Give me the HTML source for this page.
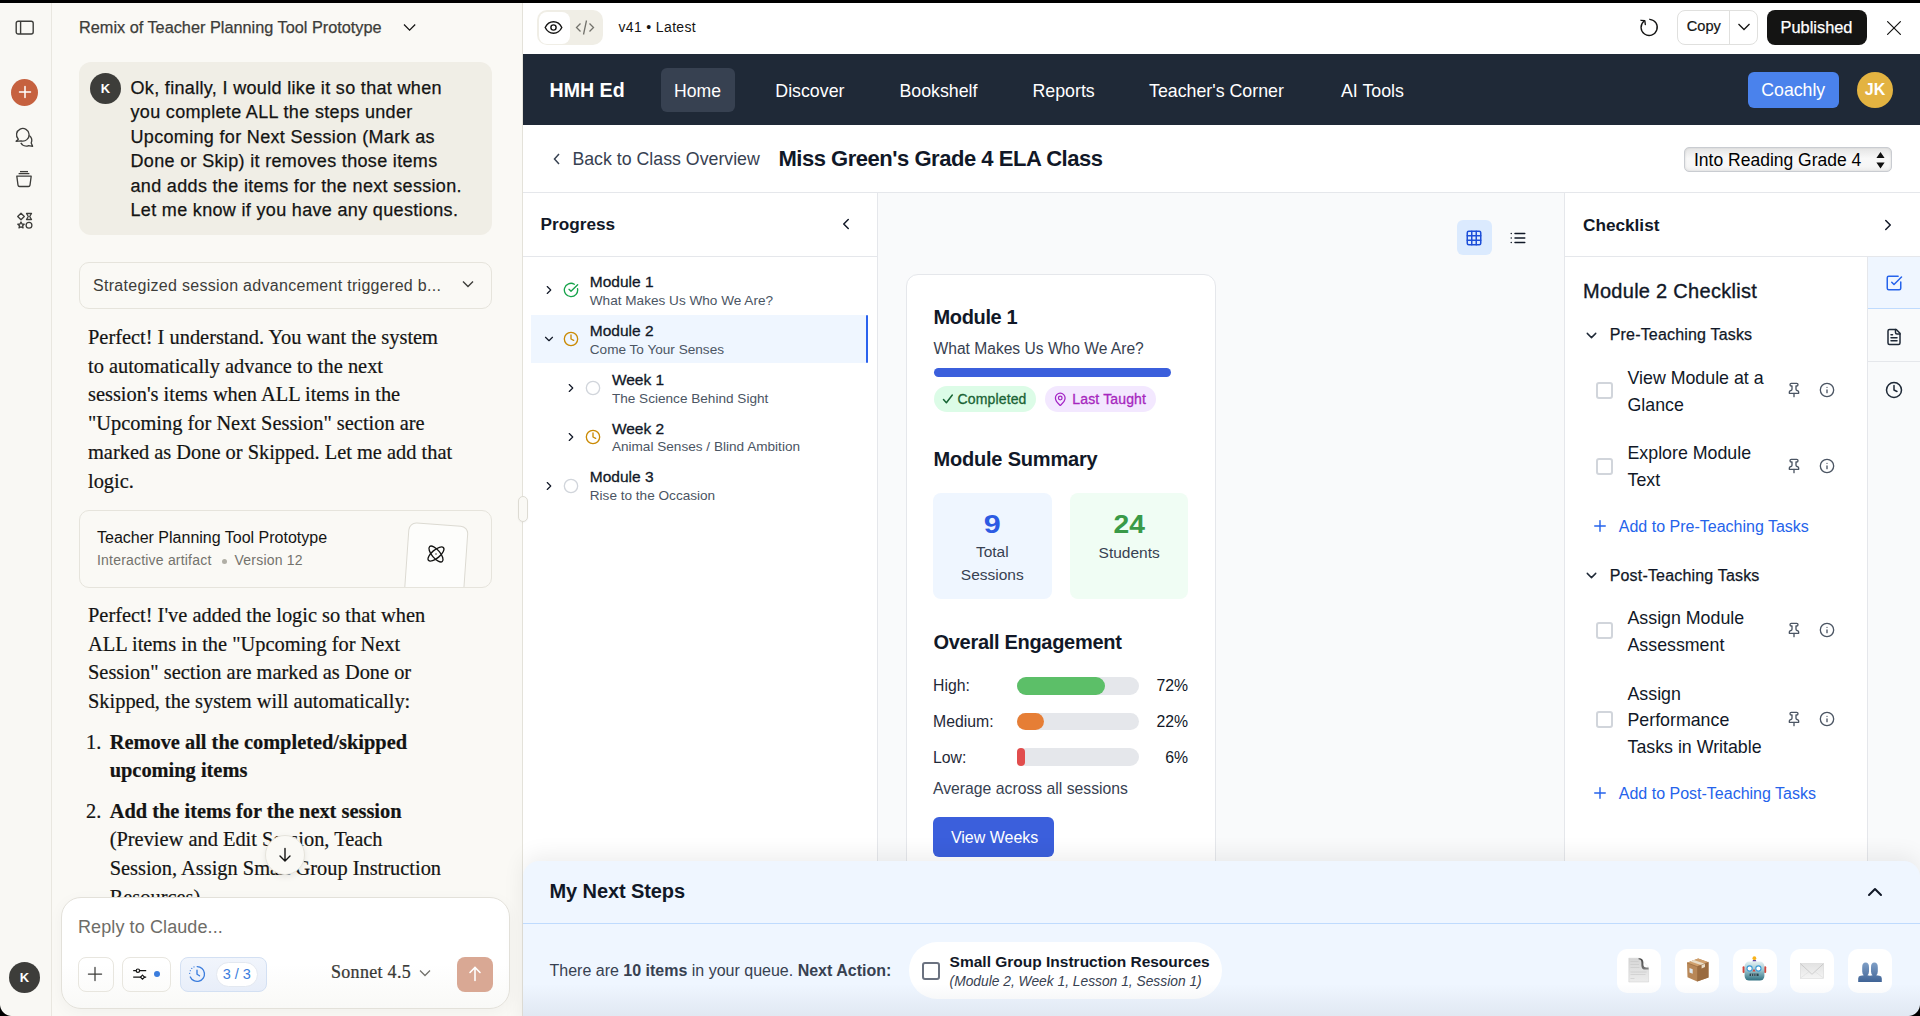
<!DOCTYPE html>
<html><head><meta charset="utf-8">
<style>
*{box-sizing:border-box;margin:0;padding:0}
html,body{width:1920px;height:1016px;overflow:hidden}
body{position:relative;background:#faf9f5;font-family:"Liberation Sans",sans-serif;color:#141413}
.a{position:absolute;white-space:nowrap}
svg{display:block}
.serif{font-family:"Liberation Serif",serif;-webkit-text-stroke:0.2px #141413}
</style></head>
<body>
<!-- top black bar -->
<div class="a" style="left:0;top:0;width:1920px;height:3px;background:#000"></div>

<!-- ICON RAIL -->
<div class="a" id="rail" style="left:0;top:3px;width:52px;height:1013px;background:#f9f8f4;border-right:1px solid #e9e7e0"></div>

<!-- CHAT COLUMN -->
<div class="a" id="chat" style="left:52px;top:3px;width:470px;height:1013px;background:#faf9f5;overflow:hidden"></div>


<!-- rail icons -->
<svg class="a" style="left:15px;top:20px" width="20" height="16" viewBox="0 0 20 16"><rect x="1.2" y="1.2" width="17" height="12.8" rx="2" fill="none" stroke="#3d3d3a" stroke-width="1.4"/><line x1="5.6" y1="1.2" x2="5.6" y2="14" stroke="#3d3d3a" stroke-width="1.4"/></svg>
<div class="a" style="left:11px;top:78.5px;width:27px;height:27px;border-radius:50%;background:#c6613f"></div>
<svg class="a" style="left:17.5px;top:85px" width="14" height="14" viewBox="0 0 14 14"><path d="M7 1.5V12.5M1.5 7H12.5" stroke="#fff" stroke-width="1.5" stroke-linecap="round"/></svg>
<svg class="a" style="left:14px;top:126px" width="20" height="22" viewBox="0 0 20 22" fill="none" stroke="#3d3d3a" stroke-width="1.3" stroke-linejoin="round"><path d="M4.35 13.25A6.3 6.3 0 1 1 7.17 14.88L2.1 15.3Z"/><path d="M15.3 9.6A6.2 6.2 0 0 1 17.2 16.9L18.6 20.3 14.6 19.6A6.3 6.3 0 0 1 6.8 16.9"/></svg>
<svg class="a" style="left:14px;top:169.3px" width="20" height="20" viewBox="0 0 20 20" fill="none" stroke="#3d3d3a" stroke-width="1.3" stroke-linejoin="round"><path d="M6 2.6h8"/><path d="M4.6 4.6h10.8"/><path d="M2.8 7.2h14.4l-1.2 9c-.1.8-.8 1.3-1.6 1.3H5.6c-.8 0-1.5-.5-1.6-1.3z"/></svg>
<svg class="a" style="left:14.8px;top:210.5px" width="20" height="20" viewBox="0 0 20 20" fill="none" stroke="#3d3d3a" stroke-width="1.3" stroke-linejoin="round"><path d="M6 2.2l3.3 3.3L6 8.8 2.7 5.5z"/><path d="M11.5 2.5h5l-1.8 3 1.8 3h-5l1.8-3z"/><circle cx="14" cy="14.3" r="2.9"/><path d="M6 11l1 2 2.2.2-1.6 1.5.5 2.2L6 15.8 4 16.9l.5-2.2-1.7-1.5L5 13z"/></svg>
<div class="a" style="left:9px;top:962px;width:31px;height:31px;border-radius:50%;background:#3d3d3a;color:#fff;font-weight:bold;font-size:13px;line-height:31px;text-align:center">K</div>

<!-- chat header -->
<div class="a" style="left:79px;top:19px;font-size:16.3px;line-height:1;color:#3d3d3a;-webkit-text-stroke:0.25px #3d3d3a">Remix of Teacher Planning Tool Prototype</div>
<svg class="a" style="left:401.5px;top:21px" width="15" height="12" viewBox="0 0 15 12"><path d="M2 3.5l5.6 5.6 5.6-5.6" fill="none" stroke="#141413" stroke-width="1.25"/></svg>

<!-- user bubble -->
<div class="a" style="left:79px;top:62px;width:413px;height:173px;border-radius:12px;background:#f0eee6"></div>
<div class="a" style="left:90px;top:72.5px;width:31px;height:31px;border-radius:50%;background:#3d3d3a;color:#fff;font-weight:bold;font-size:13px;line-height:31px;text-align:center">K</div>
<div class="a" style="left:130.5px;top:75.8px;font-size:18px;line-height:24.45px;letter-spacing:0.33px;color:#141413;-webkit-text-stroke:0.25px #141413">Ok, finally, I would like it so that when<br>you complete ALL the steps under<br>Upcoming for Next Session (Mark as<br>Done or Skip) it removes those items<br>and adds the items for the next session.<br>Let me know if you have any questions.</div>

<!-- strategized -->
<div class="a" style="left:79px;top:262px;width:413px;height:47px;border-radius:10px;border:1px solid #e6e4dc"></div>
<div class="a" style="left:93px;top:277.9px;font-size:16px;line-height:1;letter-spacing:0.3px;color:#3d3d3a">Strategized session advancement triggered b...</div>
<svg class="a" style="left:461px;top:279px" width="14" height="10" viewBox="0 0 14 10"><path d="M2 2.5l5 5 5-5" fill="none" stroke="#3d3d3a" stroke-width="1.4"/></svg>

<!-- para 1 -->
<div class="a serif" style="left:88px;top:322.7px;font-size:20.4px;line-height:28.85px;letter-spacing:0;color:#141413">Perfect! I understand. You want the system<br>to automatically advance to the next<br>session's items when ALL items in the<br>"Upcoming for Next Session" section are<br>marked as Done or Skipped. Let me add that<br>logic.</div>

<!-- artifact card -->
<div class="a" style="left:79px;top:510px;width:413px;height:78px;border-radius:10px;border:1px solid #e6e4dc;overflow:hidden">
  <div class="a" style="left:326px;top:13px;width:60px;height:80px;border-radius:8px;border:1px solid #dcdad2;background:#fdfdfb;transform:rotate(4deg)"></div>
</div>
<svg class="a" style="left:423.8px;top:542.2px" width="24" height="24" viewBox="0 0 24 24" fill="none" stroke="#141413" stroke-width="1.35"><ellipse cx="12" cy="12" rx="9.8" ry="4.1" transform="rotate(50 12 12)"/><ellipse cx="12" cy="12" rx="9.8" ry="4.1" transform="rotate(-40 12 12)"/><circle cx="12" cy="12" r="0.7" fill="#141413" stroke="none"/></svg>
<div class="a" style="left:97px;top:529.5px;font-size:16px;line-height:1;color:#141413">Teacher Planning Tool Prototype</div>
<div class="a" style="left:97px;top:553.2px;font-size:14px;line-height:1;color:#73726c;letter-spacing:0.2px">Interactive artifact <span style="display:inline-block;width:5px;height:5px;border-radius:50%;background:#b0aea5;vertical-align:middle;margin:0 8px 0 6px"></span>Version 12</div>

<!-- para 2 -->
<div class="a serif" style="left:88px;top:600.8px;font-size:20.4px;line-height:28.85px;letter-spacing:0;color:#141413">Perfect! I've added the logic so that when<br>ALL items in the "Upcoming for Next<br>Session" section are marked as Done or<br>Skipped, the system will automatically:</div>

<div class="a" style="left:52px;top:700px;width:470px;height:197px;overflow:hidden">
 <div class="a serif" style="left:34px;top:27.6px;font-size:20.4px;line-height:28.85px;color:#141413">1.</div>
 <div class="a serif" style="left:57.7px;top:27.6px;font-size:20.4px;line-height:28.85px;font-weight:bold;color:#141413">Remove all the completed/skipped<br>upcoming items</div>
 <div class="a serif" style="left:34px;top:96.6px;font-size:20.4px;line-height:28.85px;color:#141413">2.</div>
 <div class="a serif" style="left:57.7px;top:96.6px;font-size:20.4px;line-height:28.85px;color:#141413"><b>Add the items for the next session</b><br>(Preview and Edit Session, Teach<br>Session, Assign Small Group Instruction<br>Resources)</div>
</div>
<!-- scroll down btn -->
<div class="a" style="left:264.5px;top:835px;width:40px;height:40px;border-radius:50%;background:#faf9f5;border:1px solid #e6e4dc;box-shadow:0 2px 6px rgba(0,0,0,0.08)"></div>
<svg class="a" style="left:276.5px;top:847px" width="16" height="16" viewBox="0 0 16 16" fill="none" stroke="#141413" stroke-width="1.4" stroke-linecap="round"><path d="M8 1.5v12.5M3 9l5 5 5-5"/></svg>

<!-- input -->
<div class="a" style="left:61px;top:897px;width:449px;height:111.5px;border-radius:20px;background:linear-gradient(#fff 60%,#f9f9f7);border:1px solid #e3e1da;box-shadow:0 4px 16px rgba(0,0,0,0.04)"></div>
<div class="a" style="left:78px;top:918.4px;font-size:18px;line-height:1;color:#6e6d68;letter-spacing:0.1px">Reply to Claude...</div>
<div class="a" style="left:78px;top:956.5px;width:35.5px;height:35px;border-radius:8px;border:1px solid #e8e6df"></div>
<svg class="a" style="left:86.2px;top:965.1px" width="18" height="18" viewBox="0 0 18 18"><path d="M9 2.4v13.2M2.4 9h13.2" stroke="#3d3d3a" stroke-width="1.25" stroke-linecap="round"/></svg>
<div class="a" style="left:122px;top:956.5px;width:49px;height:35px;border-radius:8px;border:1px solid #e8e6df"></div>
<svg class="a" style="left:131px;top:966px" width="18" height="16" viewBox="0 0 18 16" fill="none" stroke="#141413" stroke-width="1.2"><path d="M2.2 4.7h13M2.2 11.2h13"/><circle cx="6.9" cy="4.7" r="1.7" fill="#fff"/><path d="M11.5 9.2l2 2-2 2-2-2z" fill="#fff"/></svg>
<div class="a" style="left:153.5px;top:970.8px;width:6.6px;height:6.6px;border-radius:50%;background:#3b7ddd"></div>
<div class="a" style="left:180px;top:956.5px;width:86.5px;height:35px;border-radius:8px;border:1px solid #d3e0f3;background:linear-gradient(#f1f5fc,#e8eef9)"></div>
<svg class="a" style="left:188px;top:965px" width="18" height="18" viewBox="0 0 18 18" fill="none" stroke="#3b7ddd" stroke-width="1.35" stroke-linecap="round"><path d="M9.2 1.6A7.4 7.4 0 1 1 2.3 12"/><path d="M9 5.2v4l2.5 1.6"/><path d="M1.7 8.4v.1M2.3 5.6v.1M3.8 3.3v.1M6 1.9v.1" stroke-width="1.2"/></svg>
<div class="a" style="left:216px;top:961.5px;width:41.5px;height:25px;border-radius:12.5px;background:#fff;border:1px solid #e3e8f0;font-size:14.5px;line-height:23px;text-align:center;color:#3b7ddd">3 / 3</div>
<div class="a serif" style="left:331px;top:960.2px;font-size:18px;line-height:24px;color:#3d3d3a;letter-spacing:0.3px">Sonnet 4.5</div>
<svg class="a" style="left:418px;top:967px" width="14" height="12" viewBox="0 0 14 12"><path d="M2 3.5l5 5 5-5" fill="none" stroke="#73726c" stroke-width="1.3"/></svg>
<div class="a" style="left:457px;top:956.5px;width:36px;height:35px;border-radius:8px;background:#d9a894"></div>
<svg class="a" style="left:466px;top:965px" width="18" height="18" viewBox="0 0 18 18" fill="none" stroke="#fff" stroke-width="1.6" stroke-linecap="round"><path d="M9 15.5V2.5M4 7.5l5-5 5 5"/></svg>

<!-- ARTIFACT -->
<div class="a" id="art" style="left:522px;top:3px;width:1398px;height:1013px;background:#fff;border-left:1px solid #e4e2da;overflow:hidden"></div>


<!-- ARTIFACT HEADER -->
<div class="a" style="left:537px;top:10px;width:66px;height:35px;border-radius:10px;background:#f0eee6"></div>
<div class="a" style="left:538.5px;top:11.5px;width:31px;height:32px;border-radius:8px;background:#fff"></div>
<svg class="a" style="left:544px;top:18px" width="19" height="19" viewBox="0 0 19 19" fill="none" stroke="#141413" stroke-width="1.4"><path d="M1.2 9.5C3 5.8 6 3.8 9.5 3.8s6.5 2 8.3 5.7c-1.8 3.7-4.8 5.7-8.3 5.7S3 13.2 1.2 9.5z"/><circle cx="9.5" cy="9.5" r="2.6"/></svg>
<svg class="a" style="left:575px;top:18px" width="20" height="19" viewBox="0 0 20 19" fill="none" stroke="#73726c" stroke-width="1.3"><path d="M5.5 5.5L1.5 9.5l4 4M14.5 5.5l4 4-4 4M11.5 2.5l-3 14"/></svg>
<div class="a" style="left:618.5px;top:20.2px;font-size:14px;line-height:1;color:#141413;letter-spacing:0.35px">v41 &#8226; Latest</div>
<svg class="a" style="left:1638px;top:16px" width="22" height="22" viewBox="0 0 22 22" fill="none" stroke="#141413" stroke-width="1.35" stroke-linecap="round" stroke-linejoin="round"><path d="M11.8 3.3A8.1 8.1 0 1 1 5.9 5.2"/><path d="M3 4.3L6.8 4.7 7.3 8.5"/></svg>
<div class="a" style="left:1677px;top:10px;width:80.5px;height:35px;border-radius:8px;border:1px solid #e0e0de;background:#fff"></div>
<div class="a" style="left:1729px;top:11px;width:1px;height:33px;background:#e0e0de"></div>
<div class="a" style="left:1686.8px;top:19px;font-size:14.6px;line-height:1;color:#141413;-webkit-text-stroke:0.2px #141413">Copy</div>
<svg class="a" style="left:1737px;top:21px" width="14" height="12" viewBox="0 0 14 12"><path d="M1.5 3l5.5 5.5L12.5 3" fill="none" stroke="#141413" stroke-width="1.3"/></svg>
<div class="a" style="left:1767px;top:10px;width:100px;height:35px;border-radius:8px;background:#141413"></div>
<div class="a" style="left:1780.5px;top:19px;font-size:16.4px;line-height:1;color:#fff;-webkit-text-stroke:0.25px #fff">Published</div>
<svg class="a" style="left:1886px;top:20px" width="16" height="16" viewBox="0 0 16 16" fill="none" stroke="#141413" stroke-width="1.2" stroke-linecap="round"><path d="M1.6 1.6l12.8 12.8M14.4 1.6L1.6 14.4"/></svg>

<!-- NAVBAR -->
<div class="a" style="left:523px;top:54px;width:1397px;height:71px;background:#1f2937"></div>
<div class="a" style="left:549.5px;top:81.2px;font-size:19.6px;line-height:1;font-weight:bold;color:#fff">HMH Ed</div>
<div class="a" style="left:661px;top:68px;width:74px;height:44px;border-radius:6px;background:#374151"></div>
<div class="a" style="left:674px;top:83.1px;font-size:17.6px;line-height:1;color:#fff">Home</div>
<div class="a" style="left:775.3px;top:82.9px;font-size:17.8px;line-height:1;color:#fff">Discover</div>
<div class="a" style="left:899.4px;top:82.9px;font-size:17.8px;line-height:1;color:#fff">Bookshelf</div>
<div class="a" style="left:1032.5px;top:82.9px;font-size:17.8px;line-height:1;color:#fff">Reports</div>
<div class="a" style="left:1149px;top:82.9px;font-size:17.8px;line-height:1;color:#fff">Teacher's Corner</div>
<div class="a" style="left:1341px;top:82.9px;font-size:17.8px;line-height:1;color:#fff">AI Tools</div>
<div class="a" style="left:1747.5px;top:72px;width:91.5px;height:36px;border-radius:6px;background:#4a82ec;color:#fff;font-size:17.7px;line-height:36px;text-align:center">Coachly</div>
<div class="a" style="left:1857px;top:72px;width:36px;height:36px;border-radius:50%;background:#e3b341;color:#fff;font-size:16px;font-weight:bold;line-height:36px;text-align:center">JK</div>

<!-- PAGE HEADER -->
<svg class="a" style="left:551px;top:152px" width="12" height="14" viewBox="0 0 12 14"><path d="M8 2L3.5 7 8 12" fill="none" stroke="#374151" stroke-width="1.5"/></svg>
<div class="a" style="left:572.4px;top:151px;font-size:17.76px;line-height:1;color:#374151">Back to Class Overview</div>
<div class="a" style="left:778.4px;top:148px;font-size:22px;letter-spacing:-0.47px;line-height:1;font-weight:bold;color:#111827">Miss Green's Grade 4 ELA Class</div>
<div class="a" style="left:1684px;top:147px;width:208px;height:25px;border-radius:5px;border:1px solid #c9ccd1;background:linear-gradient(#e4e4e4,#f8f8f8 45%,#f6f6f6 80%,#ececec);box-shadow:inset 1px 0 2px rgba(0,0,0,0.06),inset -1px 0 2px rgba(0,0,0,0.06)"></div>
<div class="a" style="left:1694px;top:151.7px;font-size:17.5px;line-height:1;color:#000">Into Reading Grade 4</div>
<svg class="a" style="left:1875px;top:150.5px" width="11" height="19" viewBox="0 0 11 19"><path d="M5.5 1L9.6 7H1.4zM5.5 17.5L9.6 11.5H1.4z" fill="#111"/></svg>
<div class="a" style="left:523px;top:192px;width:1397px;height:1px;background:#e5e7eb"></div>

<!-- PROGRESS PANEL -->
<div class="a" style="left:523px;top:193px;width:355px;height:823px;background:#fff;border-right:1px solid #e5e7eb"></div>
<div class="a" style="left:540.6px;top:216.3px;font-size:17.2px;line-height:1;font-weight:bold;color:#111827">Progress</div>
<svg class="a" style="left:837.0px;top:215.3px" width="18" height="18" viewBox="0 0 24 24" fill="none" stroke="#111827" stroke-width="2" stroke-linecap="round" stroke-linejoin="round"><path d="m15 18-6-6 6-6"/></svg>
<div class="a" style="left:523px;top:256px;width:354px;height:1px;background:#e5e7eb"></div>
<div class="a" style="left:531.25px;top:314.7px;width:335px;height:48.2px;background:#eff6ff"></div><div class="a" style="left:866px;top:314.7px;width:2.2px;height:48.2px;border-radius:1.2px;background:#2a62ee"></div>
<div class="a" style="left:589.75px;top:273.95px;font-size:15.5px;line-height:1;color:#111827;-webkit-text-stroke:0.3px #111827">Module 1</div>
<div class="a" style="left:589.75px;top:293.8px;font-size:13.6px;line-height:1;color:#4b5563">What Makes Us Who We Are?</div>
<div class="a" style="left:589.75px;top:322.65px;font-size:15.5px;line-height:1;color:#111827;-webkit-text-stroke:0.3px #111827">Module 2</div>
<div class="a" style="left:589.75px;top:342.5px;font-size:13.6px;line-height:1;color:#4b5563">Come To Your Senses</div>
<div class="a" style="left:611.9px;top:371.75px;font-size:15.5px;line-height:1;color:#111827;-webkit-text-stroke:0.3px #111827">Week 1</div>
<div class="a" style="left:611.9px;top:391.6px;font-size:13.6px;line-height:1;color:#4b5563">The Science Behind Sight</div>
<div class="a" style="left:611.9px;top:420.55px;font-size:15.5px;line-height:1;color:#111827;-webkit-text-stroke:0.3px #111827">Week 2</div>
<div class="a" style="left:611.9px;top:440.4px;font-size:13.6px;line-height:1;color:#4b5563">Animal Senses / Blind Ambition</div>
<div class="a" style="left:589.75px;top:469.25px;font-size:15.5px;line-height:1;color:#111827;-webkit-text-stroke:0.3px #111827">Module 3</div>
<div class="a" style="left:589.75px;top:489.1px;font-size:13.6px;line-height:1;color:#4b5563">Rise to the Occasion</div>

<svg class="a" style="left:541.9px;top:283.3px" width="14" height="14" viewBox="0 0 24 24" fill="none" stroke="#111827" stroke-width="2" stroke-linecap="round" stroke-linejoin="round"><path d="m9 18 6-6-6-6"/></svg>
<svg class="a" style="left:563.2px;top:282.3px" width="16" height="16" viewBox="0 0 24 24" fill="none" stroke="#16a34a" stroke-width="2" stroke-linecap="round" stroke-linejoin="round"><path d="M21.801 10A10 10 0 1 1 17 3.335"/><path d="m9 11 3 3L22 4"/></svg>
<svg class="a" style="left:541.9px;top:331.9px" width="14" height="14" viewBox="0 0 24 24" fill="none" stroke="#111827" stroke-width="2" stroke-linecap="round" stroke-linejoin="round"><path d="m6 9 6 6 6-6"/></svg>
<svg class="a" style="left:563.2px;top:330.9px" width="16" height="16" viewBox="0 0 24 24" fill="none" stroke="#ca8a04" stroke-width="2" stroke-linecap="round" stroke-linejoin="round"><circle cx="12" cy="12" r="10"/><polyline points="12 6 12 12 16 14"/></svg>
<svg class="a" style="left:563.9px;top:381.1px" width="14" height="14" viewBox="0 0 24 24" fill="none" stroke="#111827" stroke-width="2" stroke-linecap="round" stroke-linejoin="round"><path d="m9 18 6-6-6-6"/></svg>
<svg class="a" style="left:585.2px;top:380.1px" width="16" height="16" viewBox="0 0 24 24" fill="none" stroke="#d1d5db" stroke-width="2" stroke-linecap="round" stroke-linejoin="round"><circle cx="12" cy="12" r="10"/></svg>
<svg class="a" style="left:563.9px;top:429.9px" width="14" height="14" viewBox="0 0 24 24" fill="none" stroke="#111827" stroke-width="2" stroke-linecap="round" stroke-linejoin="round"><path d="m9 18 6-6-6-6"/></svg>
<svg class="a" style="left:585.2px;top:428.9px" width="16" height="16" viewBox="0 0 24 24" fill="none" stroke="#ca8a04" stroke-width="2" stroke-linecap="round" stroke-linejoin="round"><circle cx="12" cy="12" r="10"/><polyline points="12 6 12 12 16 14"/></svg>
<svg class="a" style="left:541.9px;top:478.6px" width="14" height="14" viewBox="0 0 24 24" fill="none" stroke="#111827" stroke-width="2" stroke-linecap="round" stroke-linejoin="round"><path d="m9 18 6-6-6-6"/></svg>
<svg class="a" style="left:563.2px;top:477.6px" width="16" height="16" viewBox="0 0 24 24" fill="none" stroke="#d1d5db" stroke-width="2" stroke-linecap="round" stroke-linejoin="round"><circle cx="12" cy="12" r="10"/></svg>
<!-- MIDDLE -->
<div class="a" style="left:878px;top:193px;width:686px;height:823px;background:#f9fafb"></div>
<div class="a" style="left:1457px;top:220px;width:35px;height:35px;border-radius:6px;background:#dbeafe"></div>
<svg class="a" style="left:1465.45px;top:228.55px" width="18" height="18" viewBox="0 0 24 24" fill="none" stroke="#1d4ed8" stroke-width="2" stroke-linecap="round" stroke-linejoin="round"><rect width="18" height="18" x="3" y="3" rx="2"/><path d="M3 9h18"/><path d="M3 15h18"/><path d="M9 3v18"/><path d="M15 3v18"/></svg>
<svg class="a" style="left:1508.5px;top:228.6px" width="18" height="18" viewBox="0 0 24 24" fill="none" stroke="#111827" stroke-width="2" stroke-linecap="round" stroke-linejoin="round"><path d="M3 12h.01"/><path d="M3 18h.01"/><path d="M3 6h.01"/><path d="M8 12h13"/><path d="M8 18h13"/><path d="M8 6h13"/></svg>

<div class="a" style="left:905.5px;top:273.5px;width:310.5px;height:700px;border-radius:12px;background:#fff;border:1px solid #e5e7eb"></div>
<div class="a" style="left:933.5px;top:307px;font-size:20px;letter-spacing:-0.35px;line-height:1;font-weight:bold;color:#111827">Module 1</div>
<div class="a" style="left:933.5px;top:341.3px;font-size:15.6px;line-height:1;color:#374151">What Makes Us Who We Are?</div>
<div class="a" style="left:933.5px;top:368px;width:237.5px;height:9px;border-radius:5px;background:#3b5fdc"></div>
<div class="a" style="left:933.5px;top:386px;width:102.5px;height:26.3px;border-radius:13px;background:#dcfce7"></div>
<svg class="a" style="left:942px;top:393px" width="12" height="12" viewBox="0 0 12 12" fill="none" stroke="#166534" stroke-width="1.5" stroke-linecap="round" stroke-linejoin="round"><path d="M1.5 6.6L4.4 9.8 10.3 2"/></svg>
<div class="a" style="left:957.5px;top:392.1px;font-size:14px;line-height:1;color:#1a6334;letter-spacing:0.15px;-webkit-text-stroke:0.3px #1a6334">Completed</div>
<div class="a" style="left:1045px;top:386px;width:110.5px;height:26.3px;border-radius:13px;background:#f3e8ff"></div>
<svg class="a" style="left:1053.15px;top:391.95px" width="14.5" height="14.5" viewBox="0 0 24 24" fill="none" stroke="#a324c5" stroke-width="2.1" stroke-linecap="round" stroke-linejoin="round"><path d="M20 10c0 4.993-5.539 10.193-7.399 11.799a1 1 0 0 1-1.202 0C9.539 20.193 4 14.993 4 10a8 8 0 0 1 16 0"/><circle cx="12" cy="10" r="3"/></svg>
<div class="a" style="left:1072.3px;top:392.1px;font-size:14px;line-height:1;color:#a626be;letter-spacing:0.15px;-webkit-text-stroke:0.3px #a626be">Last Taught</div>
<div class="a" style="left:933.5px;top:448.9px;font-size:20px;letter-spacing:-0.2px;line-height:1;font-weight:bold;color:#111827">Module Summary</div>
<div class="a" style="left:933px;top:492.6px;width:118.6px;height:106px;border-radius:8px;background:#eff6ff"></div>
<div class="a" style="left:1070px;top:492.6px;width:118.4px;height:106px;border-radius:8px;background:#f0fdf4"></div>
<div class="a" style="left:933px;top:511.8px;width:118.6px;text-align:center;font-size:25px;line-height:1;font-weight:bold;color:#2d5be3;transform:scaleX(1.22)">9</div>
<div class="a" style="left:933px;top:544.9px;width:118.6px;text-align:center;font-size:15.5px;line-height:22.7px;color:#374151;white-space:normal;margin-top:-3.65px">Total<br>Sessions</div>
<div class="a" style="left:1070px;top:511.8px;width:118.4px;text-align:center;font-size:25px;line-height:1;font-weight:bold;color:#3a9a48;transform:scaleX(1.13)">24</div>
<div class="a" style="left:1070px;top:544.9px;width:118.4px;text-align:center;font-size:15.5px;line-height:1;color:#374151">Students</div>
<div class="a" style="left:933.5px;top:631.6px;font-size:20px;letter-spacing:-0.3px;line-height:1;font-weight:bold;color:#111827">Overall Engagement</div>
<div class="a" style="left:933px;top:678.4px;font-size:15.8px;line-height:1;color:#1f2937">High:</div>
<div class="a" style="left:1017px;top:677px;width:122.3px;height:17.7px;border-radius:9px;background:#e5e7eb"><div style="width:88px;height:100%;border-radius:9px;background:#5cbf68"></div></div>
<div class="a" style="left:1108px;top:678.4px;width:80px;text-align:right;font-size:15.8px;line-height:1;color:#111827">72%</div>
<div class="a" style="left:933px;top:714.0px;font-size:15.8px;line-height:1;color:#1f2937">Medium:</div>
<div class="a" style="left:1017px;top:712.6px;width:122.3px;height:17.7px;border-radius:9px;background:#e5e7eb"><div style="width:27px;height:100%;border-radius:9px;background:#e67e35"></div></div>
<div class="a" style="left:1108px;top:714.0px;width:80px;text-align:right;font-size:15.8px;line-height:1;color:#111827">22%</div>
<div class="a" style="left:933px;top:749.6px;font-size:15.8px;line-height:1;color:#1f2937">Low:</div>
<div class="a" style="left:1017px;top:748.3px;width:122.3px;height:17.7px;border-radius:9px;background:#e5e7eb"><div style="width:8px;height:100%;border-radius:9px;background:#e14d4d"></div></div>
<div class="a" style="left:1108px;top:749.6px;width:80px;text-align:right;font-size:15.8px;line-height:1;color:#111827">6%</div>

<div class="a" style="left:933px;top:781px;font-size:15.76px;line-height:1;color:#374151">Average across all sessions</div>
<div class="a" style="left:933px;top:817.4px;width:121.4px;height:40px;border-radius:6px;background:#3b5fdc"></div>
<div class="a" style="left:950.9px;top:829.5px;font-size:16px;line-height:1;color:#fff">View Weeks</div>

<!-- CHECKLIST PANEL -->
<div class="a" style="left:1564px;top:193px;width:356px;height:823px;background:#fff;border-left:1px solid #e5e7eb"></div>
<div class="a" style="left:1583px;top:216.9px;font-size:17.2px;line-height:1;font-weight:bold;color:#111827">Checklist</div>
<svg class="a" style="left:1879.4px;top:215.5px" width="18" height="18" viewBox="0 0 24 24" fill="none" stroke="#111827" stroke-width="2" stroke-linecap="round" stroke-linejoin="round"><path d="m9 18 6-6-6-6"/></svg>
<div class="a" style="left:1565px;top:256px;width:355px;height:1px;background:#e5e7eb"></div>
<div class="a" style="left:1866.5px;top:257px;width:53.5px;height:759px;background:#f9fafb;border-left:1px solid #e5e7eb"></div>
<div class="a" style="left:1867.5px;top:257px;width:52.5px;height:52px;background:#eff6ff;border-bottom:1px solid #bfdbfe"></div>
<div class="a" style="left:1867.5px;top:310px;width:52.5px;height:52px;border-bottom:1px solid #e5e7eb"></div>
<svg class="a" style="left:1885.0px;top:274.3px" width="18" height="18" viewBox="0 0 24 24" fill="none" stroke="#2563eb" stroke-width="2" stroke-linecap="round" stroke-linejoin="round"><path d="M21 10.5V19a2 2 0 0 1-2 2H5a2 2 0 0 1-2-2V5a2 2 0 0 1 2-2h12.5"/><path d="m9 11 3 3L22 4"/></svg>
<svg class="a" style="left:1884.85px;top:327.65px" width="18" height="18" viewBox="0 0 24 24" fill="none" stroke="#1f2937" stroke-width="2" stroke-linecap="round" stroke-linejoin="round"><path d="M15 2H6a2 2 0 0 0-2 2v16a2 2 0 0 0 2 2h12a2 2 0 0 0 2-2V7Z"/><path d="M14 2v4a2 2 0 0 0 2 2h4"/><path d="M10 9H8"/><path d="M16 13H8"/><path d="M16 17H8"/></svg>
<svg class="a" style="left:1885.0px;top:381.3px" width="18" height="18" viewBox="0 0 24 24" fill="none" stroke="#1f2937" stroke-width="2" stroke-linecap="round" stroke-linejoin="round"><circle cx="12" cy="12" r="10"/><polyline points="12 6 12 12 16 14"/></svg>
<div class="a" style="left:1583px;top:280.7px;font-size:20px;line-height:1;color:#111827;letter-spacing:0.28px;-webkit-text-stroke:0.35px #111827">Module 2 Checklist</div>
<svg class="a" style="left:1582.9px;top:326.8px" width="17" height="17" viewBox="0 0 24 24" fill="none" stroke="#1f2937" stroke-width="2" stroke-linecap="round" stroke-linejoin="round"><path d="m6 9 6 6 6-6"/></svg>
<div class="a" style="left:1609.7px;top:326.5px;font-size:16px;line-height:1;color:#111827;letter-spacing:0.18px;-webkit-text-stroke:0.25px #111827">Pre-Teaching Tasks</div>
<div class="a" style="left:1596px;top:381.5px;width:17px;height:17px;border-radius:3px;border:2px solid #d1d5db;background:#fff"></div>
<div class="a" style="left:1627.5px;top:365.3px;font-size:17.8px;line-height:26.6px;color:#111827">View Module at a<br>Glance</div>
<svg class="a" style="left:1785.6px;top:382.0px" width="16" height="16" viewBox="0 0 24 24" fill="none" stroke="#4b5563" stroke-width="2" stroke-linecap="round" stroke-linejoin="round"><path d="M12 17v5"/><path d="M5 17h14v-1.76a2 2 0 0 0-1.11-1.79l-1.78-.9A2 2 0 0 1 15 10.76V6h1a2 2 0 0 0 0-4H8a2 2 0 0 0 0 4h1v4.76a2 2 0 0 1-1.11 1.79l-1.78.9A2 2 0 0 0 5 15.24Z"/></svg>
<svg class="a" style="left:1819.1px;top:382.0px" width="16" height="16" viewBox="0 0 24 24" fill="none" stroke="#4b5563" stroke-width="2" stroke-linecap="round" stroke-linejoin="round"><circle cx="12" cy="12" r="10"/><path d="M12 16v-4"/><path d="M12 8h.01"/></svg>
<div class="a" style="left:1596px;top:457.5px;width:17px;height:17px;border-radius:3px;border:2px solid #d1d5db;background:#fff"></div>
<div class="a" style="left:1627.5px;top:440.3px;font-size:17.8px;line-height:26.6px;color:#111827">Explore Module<br>Text</div>
<svg class="a" style="left:1785.6px;top:458.0px" width="16" height="16" viewBox="0 0 24 24" fill="none" stroke="#4b5563" stroke-width="2" stroke-linecap="round" stroke-linejoin="round"><path d="M12 17v5"/><path d="M5 17h14v-1.76a2 2 0 0 0-1.11-1.79l-1.78-.9A2 2 0 0 1 15 10.76V6h1a2 2 0 0 0 0-4H8a2 2 0 0 0 0 4h1v4.76a2 2 0 0 1-1.11 1.79l-1.78.9A2 2 0 0 0 5 15.24Z"/></svg>
<svg class="a" style="left:1819.1px;top:458.0px" width="16" height="16" viewBox="0 0 24 24" fill="none" stroke="#4b5563" stroke-width="2" stroke-linecap="round" stroke-linejoin="round"><circle cx="12" cy="12" r="10"/><path d="M12 16v-4"/><path d="M12 8h.01"/></svg>
<svg class="a" style="left:1591.0px;top:517.0px" width="18" height="18" viewBox="0 0 24 24" fill="none" stroke="#2563eb" stroke-width="1.9" stroke-linecap="round" stroke-linejoin="round"><path d="M5 12h14"/><path d="M12 5v14"/></svg>
<div class="a" style="left:1618.8px;top:518.6px;font-size:16px;line-height:1;color:#2563eb">Add to Pre-Teaching Tasks</div>
<svg class="a" style="left:1582.9px;top:567.1px" width="17" height="17" viewBox="0 0 24 24" fill="none" stroke="#1f2937" stroke-width="2" stroke-linecap="round" stroke-linejoin="round"><path d="m6 9 6 6 6-6"/></svg>
<div class="a" style="left:1609.7px;top:567.6px;font-size:16px;line-height:1;color:#111827;letter-spacing:0.18px;-webkit-text-stroke:0.25px #111827">Post-Teaching Tasks</div>
<div class="a" style="left:1596px;top:621.8px;width:17px;height:17px;border-radius:3px;border:2px solid #d1d5db;background:#fff"></div>
<div class="a" style="left:1627.5px;top:605.3px;font-size:17.8px;line-height:26.6px;color:#111827">Assign Module<br>Assessment</div>
<svg class="a" style="left:1785.6px;top:622.3px" width="16" height="16" viewBox="0 0 24 24" fill="none" stroke="#4b5563" stroke-width="2" stroke-linecap="round" stroke-linejoin="round"><path d="M12 17v5"/><path d="M5 17h14v-1.76a2 2 0 0 0-1.11-1.79l-1.78-.9A2 2 0 0 1 15 10.76V6h1a2 2 0 0 0 0-4H8a2 2 0 0 0 0 4h1v4.76a2 2 0 0 1-1.11 1.79l-1.78.9A2 2 0 0 0 5 15.24Z"/></svg>
<svg class="a" style="left:1819.1px;top:622.3px" width="16" height="16" viewBox="0 0 24 24" fill="none" stroke="#4b5563" stroke-width="2" stroke-linecap="round" stroke-linejoin="round"><circle cx="12" cy="12" r="10"/><path d="M12 16v-4"/><path d="M12 8h.01"/></svg>
<div class="a" style="left:1596px;top:710.8px;width:17px;height:17px;border-radius:3px;border:2px solid #d1d5db;background:#fff"></div>
<div class="a" style="left:1627.5px;top:680.7px;font-size:17.8px;line-height:26.6px;color:#111827">Assign<br>Performance<br>Tasks in Writable</div>
<svg class="a" style="left:1785.6px;top:711.3px" width="16" height="16" viewBox="0 0 24 24" fill="none" stroke="#4b5563" stroke-width="2" stroke-linecap="round" stroke-linejoin="round"><path d="M12 17v5"/><path d="M5 17h14v-1.76a2 2 0 0 0-1.11-1.79l-1.78-.9A2 2 0 0 1 15 10.76V6h1a2 2 0 0 0 0-4H8a2 2 0 0 0 0 4h1v4.76a2 2 0 0 1-1.11 1.79l-1.78.9A2 2 0 0 0 5 15.24Z"/></svg>
<svg class="a" style="left:1819.1px;top:711.3px" width="16" height="16" viewBox="0 0 24 24" fill="none" stroke="#4b5563" stroke-width="2" stroke-linecap="round" stroke-linejoin="round"><circle cx="12" cy="12" r="10"/><path d="M12 16v-4"/><path d="M12 8h.01"/></svg>
<svg class="a" style="left:1591.0px;top:784.0px" width="18" height="18" viewBox="0 0 24 24" fill="none" stroke="#2563eb" stroke-width="1.9" stroke-linecap="round" stroke-linejoin="round"><path d="M5 12h14"/><path d="M12 5v14"/></svg>
<div class="a" style="left:1618.8px;top:786px;font-size:16px;line-height:1;color:#2563eb">Add to Post-Teaching Tasks</div>

<!-- NEXT STEPS -->
<div class="a" style="left:523px;top:861px;width:1397px;height:170px;border-radius:16px 16px 0 0;background:#eff6ff;box-shadow:0 -6px 22px rgba(0,0,0,0.07)"></div>
<div class="a" style="left:549.5px;top:880.7px;font-size:20px;letter-spacing:-0.1px;line-height:1;font-weight:bold;color:#111827">My Next Steps</div>
<svg class="a" style="left:1862.85px;top:879.9px" width="24" height="24" viewBox="0 0 24 24" fill="none" stroke="#111827" stroke-width="2" stroke-linecap="round" stroke-linejoin="round"><path d="m18 15-6-6-6 6"/></svg>
<div class="a" style="left:523px;top:923px;width:1397px;height:1px;background:#bfdbfe"></div>
<div class="a" style="left:549.5px;top:963.2px;font-size:16px;line-height:1;color:#374151">There are <b>10 items</b> in your queue. <b>Next Action:</b></div>
<div class="a" style="left:909px;top:942px;width:313.3px;height:57.4px;border-radius:29px;background:#fff"></div>
<div class="a" style="left:922px;top:962px;width:18px;height:18px;border-radius:3px;border:2px solid #6b7280;background:#fff"></div>
<div class="a" style="left:949.6px;top:954.4px;font-size:15.5px;line-height:1;font-weight:bold;color:#111827">Small Group Instruction Resources</div>
<div class="a" style="left:949.6px;top:974.6px;font-size:13.8px;line-height:1;font-style:italic;color:#374151">(Module 2, Week 1, Lesson 1, Session 1)</div>
<div class="a" style="left:1617px;top:949px;width:44px;height:44px;border-radius:10px;background:#fff"></div>
<div class="a" style="left:1675px;top:949px;width:44px;height:44px;border-radius:10px;background:#fff"></div>
<div class="a" style="left:1733px;top:949px;width:44px;height:44px;border-radius:10px;background:#fff"></div>
<div class="a" style="left:1790px;top:949px;width:44px;height:44px;border-radius:10px;background:#fff"></div>
<div class="a" style="left:1848px;top:949px;width:44px;height:44px;border-radius:10px;background:#fff"></div>

<svg class="a" style="left:1628px;top:957px" width="22" height="26" viewBox="0 0 22 26"><defs><linearGradient id="pg" x1="0" y1="0" x2="0" y2="1"><stop offset="0" stop-color="#d6d6d6"/><stop offset="1" stop-color="#ececec"/></linearGradient><linearGradient id="cu" x1="0" y1="0" x2="1" y2="1"><stop offset="0" stop-color="#3a3a3a"/><stop offset="1" stop-color="#8a8a8a"/></linearGradient></defs><path d="M0.8 1.2H11Q14.6 1.2 14.6 5V7.6Q14.6 11.4 18.2 11.4H20.6V25H0.8Z" fill="url(#pg)" stroke="#cfcfcf" stroke-width="0.5"/><path d="M13 1.2L20.6 9.6V11.4Z" fill="#f4f4f4"/><path d="M10.6 1.2Q15.4 1.2 15.4 5.6V7.4Q15.4 10.4 18.4 10.4H20.6V12.6H17.6Q13.4 12.6 13.4 8.4V5.6Q13.4 2.2 10.6 2.2Z" fill="url(#cu)"/><path d="M2.5 4.5h8M2.5 7.5h8.5M2.5 10.5h9M2.5 15h16M2.5 17.5h15M2.5 21.5h4" stroke="#c4c4c4" stroke-width="0.55"/></svg>
<svg class="a" style="left:1684px;top:957px" width="26" height="26" viewBox="0 0 26 26"><path d="M3 5.8L14.2 1.5 24.5 5.2V20.5L13.2 24.6 3.5 20.2Z" fill="#b88757"/><path d="M13.2 9.6L24.5 5.2V20.5L13.2 24.6Z" fill="#9a6b3f"/><path d="M3 5.8L14.2 1.5 24.5 5.2 13.2 9.6Z" fill="#cf9f6c"/><path d="M6.5 4.4L17.6 8.2V11.4L21 10.1V6.8L9.8 3.1Z" fill="#e9dcc6"/><rect x="5.5" y="9" width="3.2" height="4.6" fill="#dfe8ef" transform="skewY(20)"/><path d="M3 5.8L13.2 9.6 24.5 5.2" fill="none" stroke="#8a5c32" stroke-width="0.5"/></svg>
<svg class="a" style="left:1741px;top:955px" width="28" height="28" viewBox="0 0 28 28"><defs><linearGradient id="rb" x1="0" y1="0" x2="0" y2="1"><stop offset="0" stop-color="#e4f1f3"/><stop offset="0.45" stop-color="#9cc6cf"/><stop offset="1" stop-color="#2f6f80"/></linearGradient></defs><circle cx="13.4" cy="3.2" r="1.9" fill="#f7b21a"/><path d="M11.4 6.5h4l-.6-1.6h-2.8z" fill="#5b3f9e"/><rect x="1.6" y="11.2" width="2.2" height="6.8" rx="1" fill="#d6463c"/><rect x="23" y="11.2" width="2.2" height="6.8" rx="1" fill="#d6463c"/><rect x="3.6" y="6.6" width="19.8" height="19" rx="4.5" fill="url(#rb)"/><circle cx="8.6" cy="13.5" r="2.6" fill="#fff" stroke="#3c9ad6" stroke-width="1.1"/><circle cx="17.4" cy="13.5" r="2.6" fill="#fff" stroke="#3c9ad6" stroke-width="1.1"/><path d="M13 13.8l-1.6 2.8h3.2z" fill="#d6463c"/><rect x="8.6" y="18.6" width="9" height="2.4" fill="#28434f"/><path d="M10.6 18.6v2.4M12.8 18.6v2.4M15 18.6v2.4" stroke="#b9c7cc" stroke-width="0.7"/></svg>
<svg class="a" style="left:1800px;top:962.5px" width="24" height="16" viewBox="0 0 24 16"><defs><linearGradient id="ev" x1="0" y1="0" x2="0" y2="1"><stop offset="0" stop-color="#e2e2e2"/><stop offset="1" stop-color="#f4f4f4"/></linearGradient></defs><rect x="0.4" y="0.5" width="23.2" height="14.8" fill="url(#ev)" stroke="#d2d2d2" stroke-width="0.5"/><path d="M0.6 0.8L12 11.3 23.4 0.8" fill="none" stroke="#b8b8b8" stroke-width="0.6"/><path d="M0.6 15L9 8.6M23.4 15L15 8.6" stroke="#d8d8d8" stroke-width="0.5"/></svg>
<svg class="a" style="left:1857px;top:961px" width="26" height="22" viewBox="0 0 26 22"><defs><linearGradient id="pp" x1="0" y1="0" x2="0" y2="1"><stop offset="0" stop-color="#7f9fc6"/><stop offset="1" stop-color="#3f6396"/></linearGradient></defs><path d="M1.2 21V17.4Q1.2 15.2 3.6 14.8L6.8 14.3Q5.2 12.8 5.2 10.5V6.2Q5.2 1.6 8.6 1.6 12 1.6 12 6.2V10.5Q12 12.8 10.4 14.3L13 14.8 15.6 14.3Q14 12.8 14 10.5V6.2Q14 1.6 17.4 1.6 20.8 1.6 20.8 6.2V10.5Q20.8 12.8 19.2 14.3L22.4 14.8Q24.8 15.2 24.8 17.4V21Z" fill="url(#pp)"/></svg>
<div class="a" style="left:523px;top:984px;width:1397px;height:32px;background:linear-gradient(rgba(120,130,150,0),rgba(120,130,150,0.12))"></div>

<div class="a" style="left:518px;top:496px;width:9.5px;height:26px;border-radius:5px;background:#faf9f5;border:1px solid #dddbd3;box-shadow:0 1px 2px rgba(0,0,0,0.04)"></div>
<div class="a" style="left:1908px;top:1004px;width:12px;height:12px;background:radial-gradient(circle at 0 0, transparent 11.5px, #000 12.5px)"></div>
<div class="a" style="left:0;top:1004px;width:12px;height:12px;background:radial-gradient(circle at 12px 0, transparent 11.5px, #000 12.5px)"></div>
</body></html>
